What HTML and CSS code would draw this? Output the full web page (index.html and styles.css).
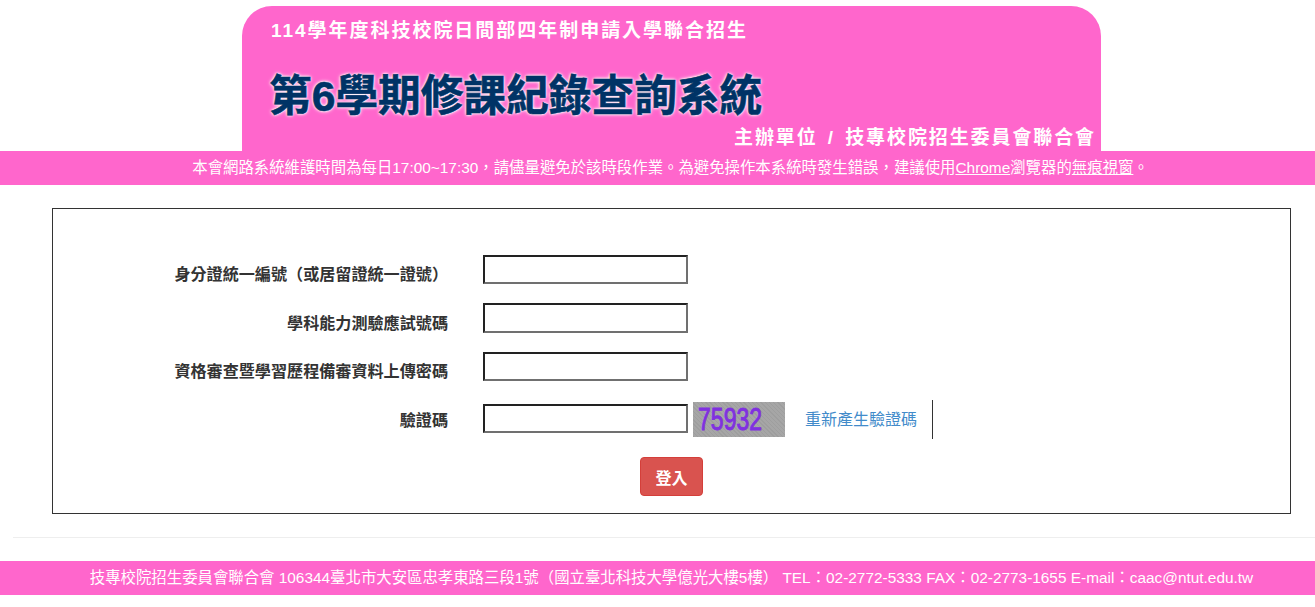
FILE: index.html
```html
<!DOCTYPE html>
<html lang="zh-Hant">
<head>
    <meta charset="UTF-8">
    <title>第6學期修課紀錄查詢系統</title>
    <link rel="stylesheet" href="styles.css">
</head>
<body>

    <div class="banner">
        <div class="banner-year">114學年度科技校院日間部四年制申請入學聯合招生</div>
        <h1 class="banner-title">第6學期修課紀錄查詢系統</h1>
        <div class="banner-org">主辦單位 / 技專校院招生委員會聯合會</div>
    </div>

    <div class="notice">本會網路系統維護時間為每日17:00~17:30，請儘量避免於該時段作業。為避免操作本系統時發生錯誤，建議使用<a href="#">Chrome</a>瀏覽器的<a href="#">無痕視窗</a>。</div>

    <form class="login-box">
        <div class="form-row">
            <label for="idNo">身分證統一編號（或居留證統一證號）</label>
            <input type="text" id="idNo" class="input-field">
        </div>
        <div class="form-row">
            <label for="examNo">學科能力測驗應試號碼</label>
            <input type="text" id="examNo" class="input-field">
        </div>
        <div class="form-row">
            <label for="pwd">資格審查暨學習歷程備審資料上傳密碼</label>
            <input type="text" id="pwd" class="input-field">
        </div>
        <div class="form-row captcha-row">
            <label for="code">驗證碼</label>
            <input type="text" id="code" class="input-field">
            <div class="captcha"><span>75932</span></div>
            <a href="#" class="refresh">重新產生驗證碼</a>
        </div>
        <div class="submit-row">
            <button type="button" class="login-button">登入</button>
        </div>
    </form>

    <hr class="divider">

    <div class="footer">技專校院招生委員會聯合會 106344臺北市大安區忠孝東路三段1號（國立臺北科技大學億光大樓5樓） TEL：02-2772-5333 FAX：02-2773-1655 E-mail：caac@ntut.edu.tw</div>

</body>
</html>
```

FILE: styles.css
```css
* {
    box-sizing: border-box;
}

body {
    margin: 0;
    background-color: #fff;
    color: #333;
    font-family: "Liberation Sans", "Noto Sans CJK TC", sans-serif;
    font-size: 15.4px;
}

.banner {
    position: relative;
    width: 859px;
    height: 145px;
    margin: 6px 0 0 242px;
    padding: 13px 0 0 29px;
    background-color: #ff66cc;
    border-radius: 30px 30px 0 0;
}

.banner-year {
    color: #fff;
    font-size: 19px;
    font-weight: bold;
    line-height: 24px;
    letter-spacing: 1.97px;
}

.banner-title {
    margin: 23px 0 0 -2px;
    color: #003366;
    font-size: 42.7px;
    font-weight: bold;
    line-height: 60px;
    -webkit-text-stroke: 0.6px #003366;
    text-shadow: 0 0 4px #fff, 0 0 3px #fff, 0 0 2px #fff;
}

.banner-org {
    position: absolute;
    right: 5px;
    bottom: 1px;
    color: #fff;
    font-size: 19px;
    font-weight: bold;
    line-height: 24px;
    letter-spacing: 1.9px;
    word-spacing: 3px;
}

.notice,
.footer {
    height: 34px;
    padding-left: 26px;
    background-color: #ff66cc;
    color: #fff;
    line-height: 34px;
    text-align: center;
}

.footer {
    padding-left: 28px;
}

.notice a {
    color: #fff;
    text-decoration: underline;
}

.login-box {
    width: 1239px;
    height: 306px;
    margin: 23px 0 0 52px;
    padding: 45.9px 0 0;
    border: 1px solid #333;
}

.form-row {
    display: flex;
    align-items: center;
    height: 29.4px;
    margin-bottom: 19.1px;
}

.form-row label {
    width: 395px;
    margin-right: 35px;
    padding-top: 7px;
    font-size: 16.1px;
    font-weight: bold;
    text-align: right;
}

.input-field {
    width: 205px;
    height: 29.4px;
    padding: 1px 2px;
    border: 2px solid #222;
    border-right-color: #707070;
    border-bottom-color: #707070;
    background-color: #fff;
}

.captcha-row {
    margin-top: 22.6px;
    margin-bottom: 0;
}

.captcha-row label {
    padding-top: 0;
}

.captcha {
    flex-shrink: 0;
    width: 92px;
    height: 35px;
    margin-top: 2px;
    margin-left: 5px;
    background-color: #a2a2a2;
    background-image: repeating-linear-gradient(45deg, #9e9e9e 0, #9e9e9e 1px, #a6a6a6 1px, #a6a6a6 3px);
}

.captcha span {
    display: block;
    width: 92px;
    padding-left: 7px;
    color: #8030e0;
    font-family: "Liberation Sans", sans-serif;
    font-size: 32px;
    line-height: 35px;
    -webkit-text-stroke: 1px #8030e0;
    transform: scaleX(0.72);
    transform-origin: left center;
}

.refresh {
    display: flex;
    flex-shrink: 0;
    align-items: center;
    height: 39px;
    margin-top: 2px;
    margin-left: 20px;
    padding-right: 15px;
    padding-bottom: 4px;
    border-right: 1px solid #333;
    color: #428bca;
    font-size: 16px;
    text-decoration: none;
}

.submit-row {
    margin-top: 24px;
    text-align: center;
}

.login-button {
    width: 63px;
    height: 39px;
    padding: 0;
    background-color: #d9534f;
    border: 1px solid #d43f3a;
    border-radius: 4px;
    color: #fff;
    font-family: inherit;
    font-size: 16px;
    font-weight: bold;
    cursor: pointer;
}

.divider {
    height: 1px;
    margin: 23px 0 23px 13px;
    border: 0;
    background-color: #eee;
}
```
